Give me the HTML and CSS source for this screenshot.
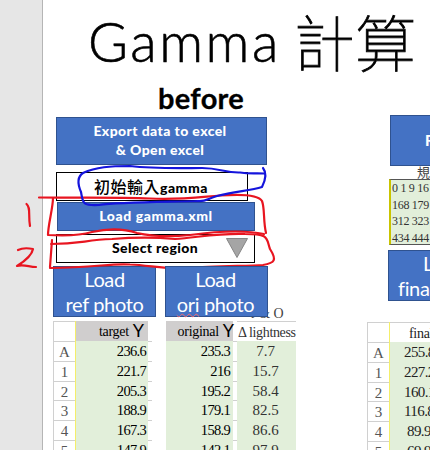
FILE: index.html
```html
<!DOCTYPE html>
<html lang="zh-Hant">
<head>
<meta charset="utf-8">
<title>Gamma 計算</title>
<link rel="stylesheet" href="styles.css">
</head>
<body>
<main class="slide">
  <h1 class="title"><span>Gamma</span><span class="title-cjk">計算</span></h1>
  <div class="columns">
    <section class="before">
      <h2 class="heading">before</h2>
      <div class="btn export">Export data to excel<br>&amp; Open excel</div>
      <div class="field initial"><span class="cjk">初始輸入</span>gamma</div>
      <div class="btn load-xml">Load gamma.xml</div>
      <div class="field region"><span>Select region</span><svg width="22" height="20" viewBox="0 0 22 20"><path d="M.5.5h21L11 19.5z" fill="#a5a5a5" stroke="#858585"/></svg></div>
      <div class="photos">
        <div class="btn photo">Load<br>ref photo</div>
        <div class="btn photo ori">Load<br><span class="misspelt">ori</span> photo</div>
        <span class="formula">r &amp; O</span>
      </div>
      <div class="tables">
        <div class="sheet index"><b></b><i>A</i><i>1</i><i>2</i><i>3</i><i>4</i><i>5</i></div>
        <div class="sheet target"><b><span>target</span><em>Y</em></b><i>236.6</i><i>221.7</i><i>205.3</i><i>188.9</i><i>167.3</i><i>147.9</i></div>
        <div class="sheet stub"><b></b><i></i><i></i><i></i><i></i><i></i><i></i></div>
        <div class="sheet original"><b><span>original</span><em>Y</em></b><i>235.3</i><i>216</i><i>195.2</i><i>179.1</i><i>158.9</i><i>142.1</i></div>
        <div class="sheet stub"><b></b><i></i><i></i><i></i><i></i><i></i><i></i></div>
        <div class="sheet delta"><b>Δ lightness</b><i>7.7</i><i>15.7</i><i>58.4</i><i>82.5</i><i>86.6</i><i>97.9</i></div>
      </div>
    </section>
    <section class="after">
      <div class="btn run">R</div>
      <div class="spec">規</div>
      <div class="codes">0 1 9 16<br>168 179<br>312 323<br>434 444</div>
      <div class="btn photo final"><span class="first">L</span><br>final</div>
      <div class="tables">
        <div class="sheet index"><b></b><i>A</i><i>1</i><i>2</i><i>3</i><i>4</i><i>5</i></div>
        <div class="sheet final-values"><b>final</b><i>255.8</i><i>227.2</i><i>160.1</i><i>116.8</i><i>89.9</i><i>69.9</i></div>
      </div>
    </section>
  </div>
</main>
<svg class="ink" width="430" height="450" viewBox="0 0 430 450">
  <g class="red">
    <path d="M39 197.5C75 198 115 197 150 198.500C180 200 200 197 220 195.500C240 194 258 194 262 201C265 209 263 220 266 233"/>
    <path d="M53 198C53 208 48 225 48 235C65 236 82 235 92 232C110 228 125 229 137 233C150 236 170 237 190 235C220 231 245 230 264 234"/>
    <path d="M52 240L50 267M51 244C80 244 85 240 112 239C135 237 155 237 175 239C200 237 220 233 245 234C270 234 266 238 270 249C277 260 275 263 263 265C245 266 210 266 190 268C165 270 150 265 130 264.500C110 263 95 268 50 268"/>
    <path d="M26.500 204C31 208 28 214 30 226"/>
    <path d="M18 250C22 248 28 248 33 249C32 255 25 261 17 266C24 264 29 267 36 267"/>
  </g>
  <path class="blue" d="M263 168C267 173 265 181 262 187C250 191 235 191 217 196C207 199 205 202 198 201C170 202 120 202 99 205C82 206 83 203 81 192C78 185 77 177 83 173C96 167 110 166 130 166C155 169 185 168 202 168C220 168 225 173 240 172.500C250 174 255 173 264 173.500"/>
</svg>
</body>
</html>
```
FILE: styles.css
```css
* { box-sizing: border-box; }
body {
  margin: 0;
  width: 430px;
  height: 450px;
  overflow: hidden;
  position: relative;
  background: #e6e6e6;
  font-family: Lato, "Noto Sans CJK TC", sans-serif;
  color: #000;
}
.slide {
  margin-left: 42px;
  height: 450px;
  border-left: 1px solid #b5b5b5;
  background: #fff;
  overflow: hidden;
}
.title {
  display: flex;
  align-items: center;
  gap: 13px;
  margin: 0;
  height: 82px;
  padding-left: 45px;
  font-weight: 300;
  font-size: 54.5px;
  line-height: 80px;
  letter-spacing: 2.5px;
  white-space: nowrap;
  -webkit-text-stroke: .6px #000;
}
.title-cjk {
  font-family: "Noto Sans CJK TC", sans-serif;
  font-weight: 100;
  font-size: 61px;
  line-height: 82px;
  letter-spacing: 0;
  -webkit-text-stroke: .8px #000;
}
.columns { display: flex; gap: 71px; }
.before {
  flex: none;
  width: 243px;
  margin-left: 10px;
  display: flex;
  flex-direction: column;
}
.heading {
  margin: 0 0 0 105px;
  height: 35px;
  font-size: 29px;
  font-weight: 700;
  line-height: 31px;
  letter-spacing: .3px;
  -webkit-text-stroke: .3px #000;
}
.btn {
  background: #4472c4;
  border: 1px solid #2f528f;
  color: #fff;
  text-align: center;
  white-space: nowrap;
}
.export {
  margin-left: 3px;
  width: 211px;
  height: 48px;
  font-size: 14px;
  font-weight: 900;
  line-height: 19px;
  padding: 3px 3px 0 0;
  letter-spacing: .4px;
}
.field { border: 1px solid #000; font-weight: 900; white-space: nowrap; }
.initial {
  margin: 7px 0 1px 3px;
  width: 192px;
  height: 29px;
  padding-left: 37px;
  font-size: 14px;
  line-height: 27px;
  letter-spacing: .5px;
}
.cjk { font-weight: 500; font-size: 16px; }
.load-xml {
  margin-left: 4px;
  width: 198px;
  height: 29px;
  font-size: 14px;
  font-weight: 900;
  line-height: 26px;
  letter-spacing: .6px;
}
.region {
  display: flex;
  margin: 3px 0 3px 3px;
  width: 199px;
  height: 29px;
  padding-left: 55px;
  font-size: 14px;
  line-height: 26px;
  letter-spacing: .35px;
}
.region span { width: 114px; }
.region svg { margin-top: 3px; }
.photos {
  display: flex;
  gap: 9px;
  height: 55px;
  position: relative;
}
.photo {
  width: 103px;
  height: 51px;
  font-size: 20px;
  line-height: 25px;
  letter-spacing: -.35px;
}
.ori { position: relative; z-index: 1; padding-right: 2px; }
.misspelt { text-decoration: underline wavy #f46a70 1px; text-underline-offset: 1px; }
.formula {
  position: absolute;
  left: 198px;
  top: 40px;
  font: 14px/16px "Liberation Serif", serif;
  color: #444;
}
.tables { display: flex; font-family: "Liberation Serif", serif; font-size: 15px; }
.sheet { display: grid; grid-template-rows: 20px repeat(6, 19.75px); flex: none; }
.sheet b, .sheet i, .sheet em { font-style: normal; font-weight: 400; white-space: nowrap; }
.sheet i, .sheet b { line-height: 21px; }
.index { width: 23px; border-left: 1px solid #d0d0d0; border-right: 1px solid #f4ee6a; color: #555; text-align: center; }
.index b, .index i { border-top: 1px solid #d0d0d0; }
.target { width: 72px; background: #e2efda; text-align: right; }
.target i { padding-right: 2px; }
.target b, .original b { display: flex; justify-content: flex-end; gap: 4px; background: #d0cece; }
.target em, .original em { font: 18px/19px Lato, sans-serif; }
.target span, .original span { font-size: 14px; letter-spacing: -.3px; }
.target b { padding-right: 4px; }
.target i, .original i { font-size: 14.5px; letter-spacing: -.7px; }
.stub { width: 4px; }
.stub i { border-top: 1px solid #d0d0d0; }
.original { width: 67px; margin-left: 14px; background: #e2efda; text-align: right; }
.original i { padding-right: 3px; }
.original b { padding-right: 0; }
.original em { margin-right: -1px; }
.delta { width: 59px; background: #e2efda; color: #333; text-align: center; }
.delta i { padding-right: 2px; }
.delta b { background: #fff; border-top: 1px solid #d0d0d0; font-size: 14px; text-align: left; padding-left: 1px; letter-spacing: -.35px; }
.after { flex: none; width: 110px; padding-top: 33px; }
.run {
  margin-left: 23px;
  width: 140px;
  height: 51px;
  font-size: 15px;
  font-weight: 900;
  line-height: 48px;
  text-align: left;
  padding-left: 34px;
}
.spec {
  margin-left: 23px;
  height: 13px;
  padding-left: 27px;
  font-size: 13px;
  line-height: 12px;
  color: #444;
}
.codes {
  margin-left: 22px;
  width: 140px;
  height: 66px;
  border: 1px solid #555;
  border-left: 2px solid #c9c400;
  background: #e2efda;
  padding-left: 1px;
  font: 12px/16.500px "Liberation Serif", serif;
  letter-spacing: -.3px;
  color: #333;
}
.final {
  margin: 5px 0 21px 21px;
  width: 130px;
  text-align: left;
  padding-left: 9px;
}
.first { margin-left: 25px; }
.final-values { width: 90px; background: #e2efda; color: #222; }
.final-values b { background: #fff; border-top: 1px solid #d0d0d0; padding-left: 19px; font-size: 14px; letter-spacing: -.3px; }
.final-values i { padding-left: 14px; letter-spacing: -.6px; }
.final-values i:nth-child(n+6) { padding-left: 17px; }
.ink { position: absolute; left: 0; top: 0; fill: none; stroke-width: 2.2; stroke-linecap: round; stroke-linejoin: round; }
.red { stroke: #e81520; }
.blue { stroke: #1414dc; }
```
